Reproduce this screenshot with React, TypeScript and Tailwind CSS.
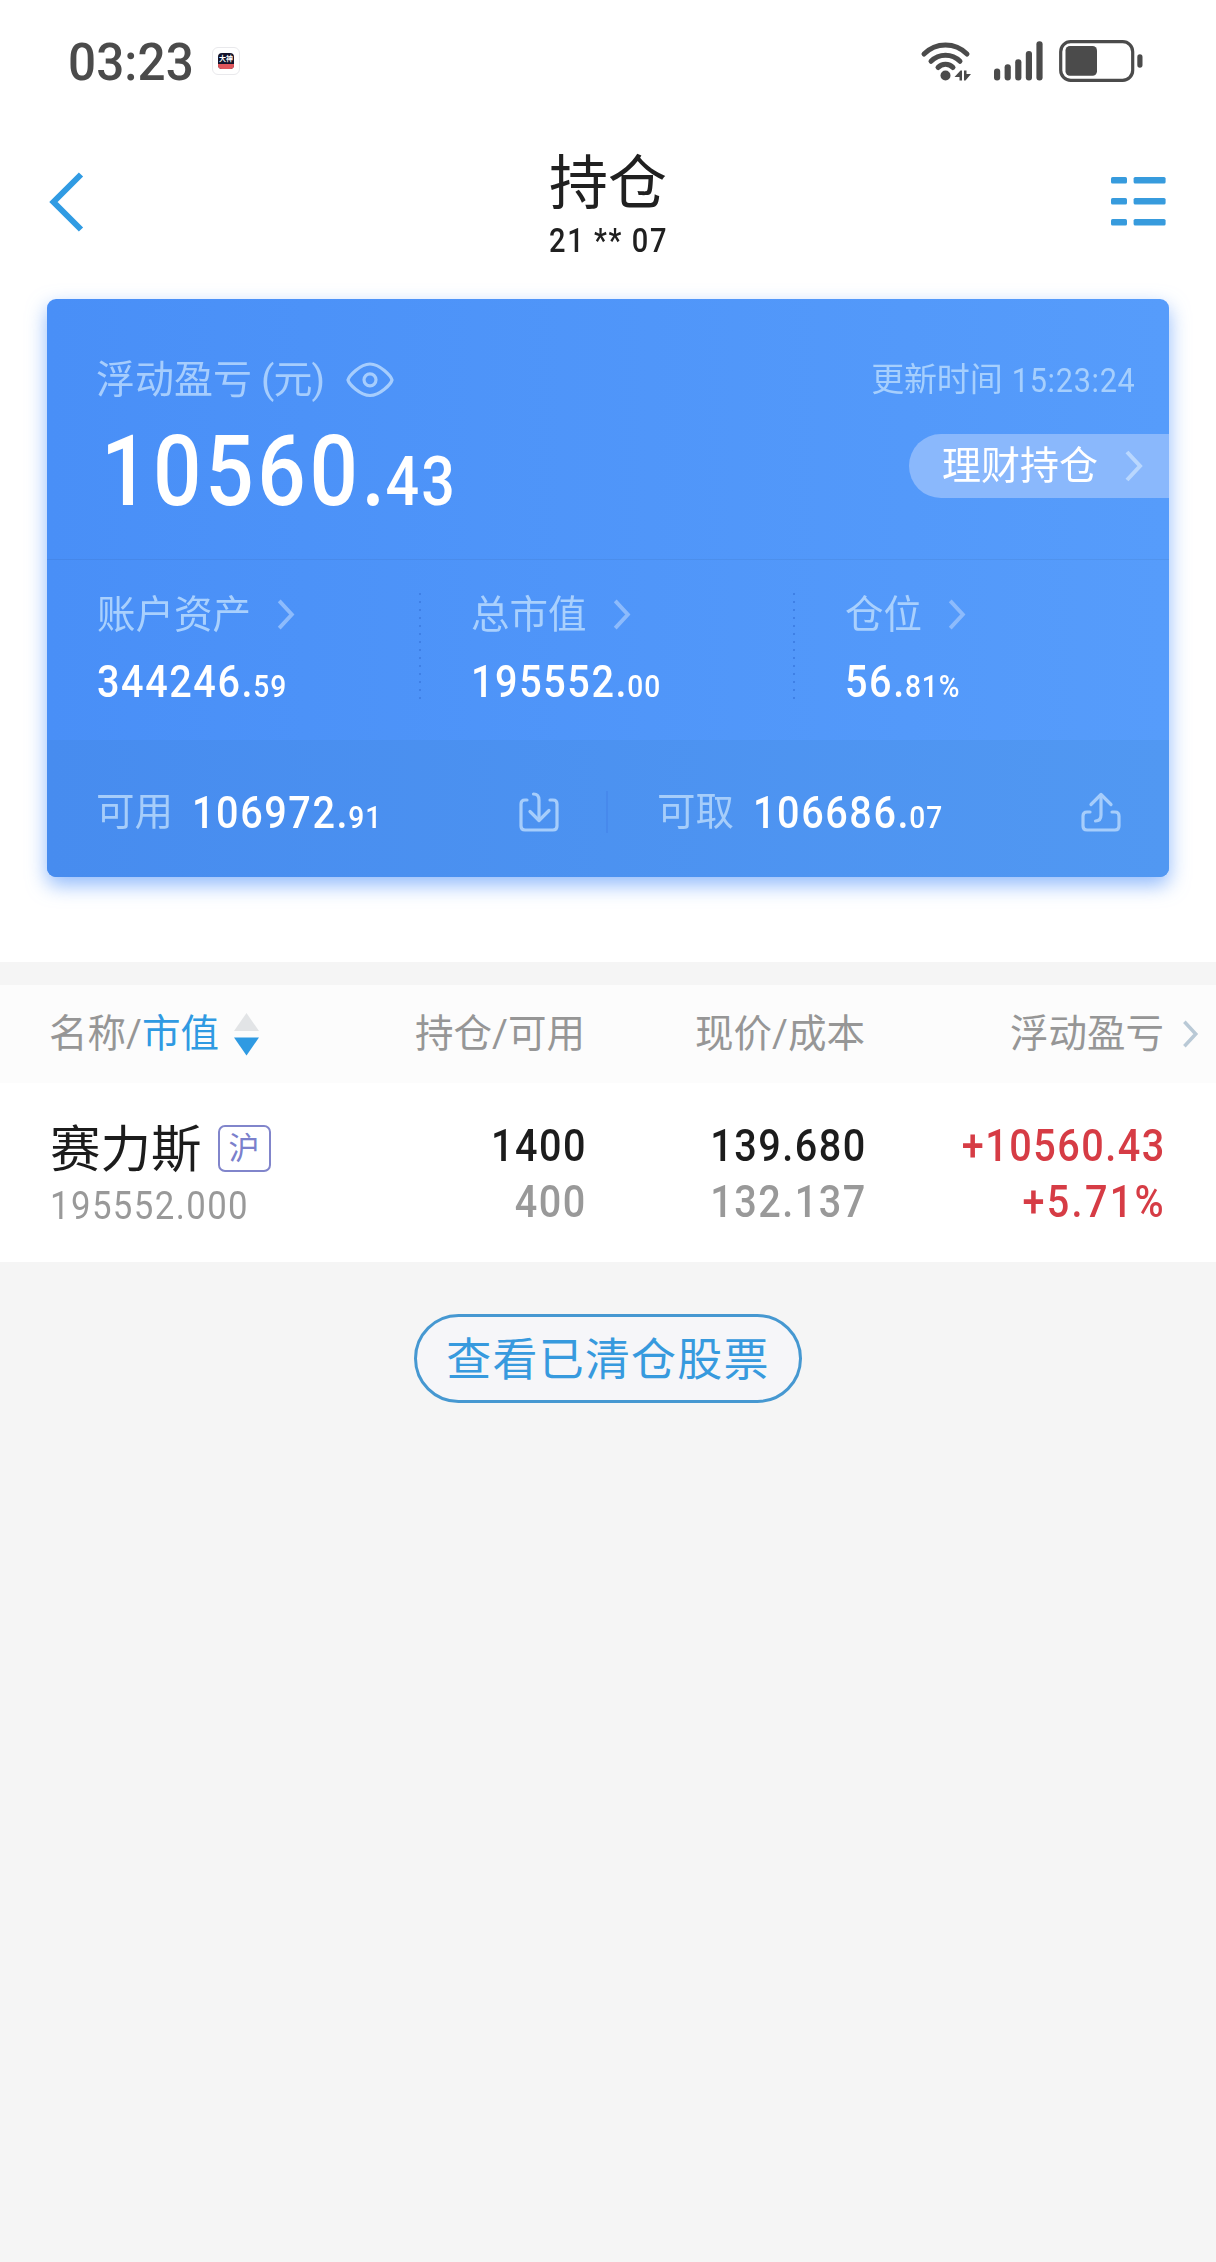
import React from 'react';

interface MoneyProps {
    int: string;
    frac: string;
}

interface SummaryItem extends MoneyProps {
    label: string;
}

const SUMMARY: SummaryItem[] = [
    { label: '账户资产', int: '344246.', frac: '59' },
    { label: '总市值', int: '195552.', frac: '00' },
    { label: '仓位', int: '56.', frac: '81%' },
];

/* ------------------ Icons ------------------ */

const WifiIcon = () => (
    <svg width="52" height="42" viewBox="0 0 52 42" fill="none" stroke="#4b4b4b" strokeWidth="5" strokeLinecap="round">
        <path d="M4 14C16 2 35 2 47 14" />
        <path d="M11 21.3C19 13.2 32 13.2 40 21.3" />
        <path d="M18 27.5C22 23 29 23 33 27.5" />
        <circle cx="25.5" cy="35.5" r="5" fill="#4b4b4b" stroke="none" />
        <path d="M40.5 30.5H42V40.5H39.5V37H34.5ZM44 30.5H46.5V34H51L45.5 40.5H44Z" fill="#4b4b4b" stroke="none" />
    </svg>
);

const SignalIcon = () => (
    <svg width="50" height="42" viewBox="0 0 50 42" fill="#4b4b4b">
        <rect x="1" y="28.5" width="6.2" height="12" rx="3" />
        <rect x="11.6" y="24.3" width="6.2" height="16.2" rx="3" />
        <rect x="22.2" y="19.3" width="6.2" height="21.2" rx="3" />
        <rect x="32.8" y="11" width="6.2" height="29.5" rx="3" />
        <rect x="43.4" y="1.3" width="6.2" height="39.2" rx="3" />
    </svg>
);

const BatteryIcon = () => (
    <svg width="84" height="42" viewBox="0 0 84 42" fill="#4b4b4b">
        <rect x="1.7" y="1.7" width="72" height="38.6" rx="10" fill="none" stroke="#4b4b4b" strokeWidth="3.2" />
        <rect x="6.5" y="6" width="31.5" height="29.8" rx="4.5" />
        <rect x="78.3" y="14.3" width="5.2" height="13.4" rx="2.6" />
    </svg>
);

const BackIcon = () => (
    <svg width="36" height="62" viewBox="0 0 36 62" fill="none" stroke="#309be3" strokeWidth="6">
        <path d="M32 3.5L4.5 31L32 58.5" />
    </svg>
);

const ListIcon = () => (
    <svg width="55" height="49" viewBox="0 0 55 49" fill="#379bdd">
        <rect x="0" y="0" width="16" height="6.6" rx="1.6" />
        <rect x="22.6" y="0" width="32" height="6.6" rx="1.6" />
        <rect x="0" y="21" width="16" height="6.6" rx="1.6" />
        <rect x="22.6" y="21" width="32" height="6.6" rx="1.6" />
        <rect x="0" y="42" width="16" height="6.6" rx="1.6" />
        <rect x="22.6" y="42" width="32" height="6.6" rx="1.6" />
    </svg>
);

const EyeIcon = () => (
    <svg width="48" height="36" viewBox="0 0 48 36" fill="none" stroke="#a6cdfd" strokeWidth="3.2">
        <path d="M2 18C3 14 14 2 24 2S45 14 46 18C45 22 34 33.5 24 33.5S3 22 2 18Z" />
        <circle cx="24" cy="17.8" r="6" />
    </svg>
);

const Chevron = ({ className }: { className: string }) => (
    <svg viewBox="0 0 18 32" fill="none" stroke="currentColor" strokeWidth="4" className={className}>
        <path d="M2 2L15 16L2 30" />
    </svg>
);

const TransferInIcon = () => (
    <svg width="40" height="40" viewBox="0 0 40 40" fill="none" stroke="#a6cdfb" strokeWidth="3.2" strokeLinecap="round" strokeLinejoin="round">
        <path d="M8 8H6Q2 8 2 12V34Q2 38 6 38H34Q38 38 38 34V12Q38 8 34 8H31" />
        <path d="M14.5 2Q20 2 20 8V28" />
        <path d="M11 19.5L20 28.5L30 18.5" />
    </svg>
);

const TransferOutIcon = () => (
    <svg width="40" height="40" viewBox="0 0 40 40" fill="none" stroke="#a6cdfb" strokeWidth="3.2" strokeLinecap="round" strokeLinejoin="round">
        <path d="M9 20H6Q2 20 2 24V34Q2 38 6 38H34Q38 38 38 34V24Q38 20 34 20H31" />
        <path d="M20 3V23Q20 29 14.5 29" />
        <path d="M10 12.5L20 2.5L30 12.5" />
    </svg>
);

const SortIcon = () => (
    <svg width="25" height="43" viewBox="0 0 25 43">
        <path d="M12.5 0L25 18H0Z" fill="#e2e4e6" />
        <path d="M12.5 42.5L25 24.5H0Z" fill="#2f9ae2" />
    </svg>
);

// digits are drawn condensed with open spacing
const Money = ({ int, frac }: MoneyProps) => (
    <span className="inline-block origin-left scale-x-[0.88] text-[45px] leading-none font-medium tracking-[1.8px] whitespace-nowrap text-white">
        {int}
        <span className="-ml-[1px] text-[32px] tracking-[1px]">{frac}</span>
    </span>
);

const Cell = ({ children, className }: { children: React.ReactNode; className: string }) => (
    <span className={`-mr-[2px] inline-block origin-right scale-x-[0.88] ${className}`}>{children}</span>
);

/* ------------------ Sections ------------------ */

const StatusBar = () => (
    <div className="flex h-[122px] items-center pl-[68px] pr-[73px]">
        <span className="mt-[4px] w-[129px] origin-left scale-x-[0.95] text-[52px] leading-none font-medium tracking-[0.1px] whitespace-nowrap text-[#4b4b4b]">
            03:23
        </span>
        <div className="ml-[15px] flex h-[28px] w-[28px] items-center justify-center rounded-[6px] border border-[#e9e9ec]">
            <div className="flex h-[16px] w-[16px] flex-col overflow-hidden rounded-[4px] bg-[#14142b] text-center leading-none text-white">
                <span className="h-[11px] text-[7px] leading-[12px] font-bold whitespace-nowrap">大神</span>
                <span className="h-[5px] bg-[#e0565c]" />
            </div>
        </div>
        <div className="ml-auto flex items-center">
            <WifiIcon />
            <div className="ml-[21px]">
                <SignalIcon />
            </div>
            <div className="ml-[16px]">
                <BatteryIcon />
            </div>
        </div>
    </div>
);

const NavBar = () => (
    <header className="flex h-[177px] items-start justify-between pl-[49px] pr-[50px]">
        <button className="mt-[49px] w-[56px]">
            <BackIcon />
        </button>
        <div className="mt-[32px] flex flex-col items-center text-[#202020]">
            <h1 className="text-[59px] leading-none">持仓</h1>
            <span className="mt-[11px] ml-[2px] inline-block scale-x-[0.88] text-[33px] leading-none font-medium tracking-[1.8px] whitespace-nowrap">
                21 ** 07
            </span>
        </div>
        <button className="mt-[55px]">
            <ListIcon />
        </button>
    </header>
);

const AssetCard = () => (
    <section className="mx-[47px] h-[578px] overflow-hidden rounded-[9px] bg-linear-to-r from-[#498ff7] to-[#569cfb]">
        <div className="flex h-[261px] justify-between border-b border-[#000000]/5 pl-[49px]">
            <div className="pt-[62px]">
                <div className="flex items-center text-[#a6cdfd]">
                    <span className="text-[39px] leading-none">浮动盈亏</span>
                    <span className="ml-[9px] text-[39px] leading-none tracking-[-0.9px]">(元)</span>
                    <div className="mb-[2px] ml-[22px]">
                        <EyeIcon />
                    </div>
                </div>
                <div className="mt-[23px] ml-[5px] w-[400px] origin-left scale-x-[0.87] text-[98px] leading-none font-medium tracking-[4.2px] whitespace-nowrap text-white">
                    10560.<span className="-ml-[4px] text-[68px] tracking-[2.5px]">43</span>
                </div>
            </div>
            <div className="flex flex-col items-end pt-[64px]">
                <div className="flex pr-[33px] text-[33px] leading-none whitespace-nowrap text-[#a6cffd]">
                    <span className="tracking-[-0.2px]">更新时间</span>
                    <span className="-ml-[4px] inline-block origin-right scale-x-[0.9] text-[34px] tracking-[0.8px]">15:23:24</span>
                </div>
                <button className="mt-[37px] flex h-[64px] w-[260px] items-center rounded-l-full bg-[#8ab8fc] pt-[1px] pl-[33px]">
                    <span className="text-[39px] leading-none text-white">理财持仓</span>
                    <Chevron className="mb-[2px] ml-[27px] h-[32px] w-[18px] text-[#b9d7fe]" />
                </button>
            </div>
        </div>

        <div className="grid h-[180px] grid-cols-3">
            {SUMMARY.map((item, i) => (
                <div key={item.label} className="flex">
                    <div className="flex flex-1 flex-col items-start pt-[36px] pl-[50px]">
                        <div className="flex items-center">
                            <span className="text-[38.5px] leading-none text-[#a9d0fd]">{item.label}</span>
                            <Chevron className="mb-[1px] ml-[26px] h-[31px] w-[18px] text-[#8dbbfc]" />
                        </div>
                        <div className="mt-[24px]">
                            <Money int={item.int} frac={item.frac} />
                        </div>
                    </div>
                    {i < 2 && (
                        <div className="mt-[33px] h-[112px] w-[2px] bg-[repeating-linear-gradient(to_bottom,#3f80e6_0,#3f80e6_2px,transparent_2px,transparent_8px)]" />
                    )}
                </div>
            ))}
        </div>

        <div className="flex h-[137px] items-center bg-linear-to-r from-[#478cef] to-[#5198f2] pt-[7px]">
            <div className="flex w-[561px] items-center pl-[49px]">
                <span className="w-[96px] text-[38.5px] leading-none text-[#a6cdfa]">可用</span>
                <Money int="106972." frac="91" />
                <div className="ml-auto">
                    <TransferInIcon />
                </div>
                <div className="ml-[47px] h-[42px] w-[2px] bg-[#4789ec]" />
            </div>
            <div className="flex flex-1 items-center pr-[48px] pl-[49px]">
                <span className="w-[96px] text-[38.5px] leading-none text-[#a6cdfa]">可取</span>
                <Money int="106686." frac="07" />
                <div className="ml-auto">
                    <TransferOutIcon />
                </div>
            </div>
        </div>
    </section>
);

const Holdings = () => (
    <section className="mt-[85px]">
        <div className="h-[23px] bg-[#f5f5f5]" />
        <div className="flex h-[98px] items-center bg-[#fcfcfc] text-[38.5px] leading-none text-[#969696]">
            <div className="flex w-[300px] items-center pl-[49px]">
                <span>
                    名称/<span className="text-[#2f9ae2]">市值</span>
                </span>
                <div className="ml-[15px]">
                    <SortIcon />
                </div>
            </div>
            <span className="w-[285px] text-right">持仓/可用</span>
            <span className="w-[280px] text-right">现价/成本</span>
            <span className="w-[299px] text-right">浮动盈亏</span>
            <Chevron className="ml-[18px] h-[28px] w-[17px] text-[#b9c9d6]" />
        </div>

        <div className="flex h-[179px] text-[45px] leading-none font-medium tracking-[1.7px]">
            <div className="flex w-[300px] flex-col pt-[42px] pl-[50px]">
                <div className="flex items-center">
                    <span className="text-[50.5px] leading-none font-normal tracking-normal text-[#1c1c1c]">赛力斯</span>
                    <span className="-mt-[4px] ml-[16px] flex h-[47px] w-[53px] items-center justify-center rounded-[7px] border-2 border-[#8185cb] text-[31px] leading-none font-normal tracking-normal text-[#7b80cc]">
                        沪
                    </span>
                </div>
                <span className="mt-[10px] inline-block origin-left scale-x-[0.88] text-[39.5px] font-normal tracking-[1.6px] text-[#999999]">
                    195552.000
                </span>
            </div>
            <div className="flex w-[285px] flex-col items-end gap-[11px] pt-[40px]">
                <Cell className="text-[#1c1c1c]">1400</Cell>
                <Cell className="text-[#999999]">400</Cell>
            </div>
            <div className="flex w-[280px] flex-col items-end gap-[11px] pt-[40px]">
                <Cell className="text-[#1c1c1c]">139.680</Cell>
                <Cell className="text-[#999999]">132.137</Cell>
            </div>
            <div className="flex w-[299px] flex-col items-end gap-[11px] pt-[40px] text-[#d63c45]">
                <Cell className="">+10560.43</Cell>
                <Cell className="tracking-[2.6px]">+5.71%</Cell>
            </div>
        </div>
    </section>
);

const App: React.FC = () => {
    return (
        <main className="min-h-[2262px] w-[1216px] overflow-hidden bg-[#f5f5f5] font-['Roboto','Noto_Sans_CJK_SC',sans-serif]">
            <div className="bg-white">
                <StatusBar />
                <NavBar />
                <div className="[filter:drop-shadow(0_8px_10px_rgba(70,140,250,0.6))]">
                    <AssetCard />
                </div>
                <Holdings />
            </div>
            <div className="flex justify-center pt-[52px]">
                <button className="h-[89px] w-[388px] rounded-full border-[3px] border-[#4698d1] bg-[#f6f6f9] pt-[4px] text-[45px] leading-none tracking-[1.2px] text-[#379ade]">
                    查看已清仓股票
                </button>
            </div>
        </main>
    );
};

export default App;
